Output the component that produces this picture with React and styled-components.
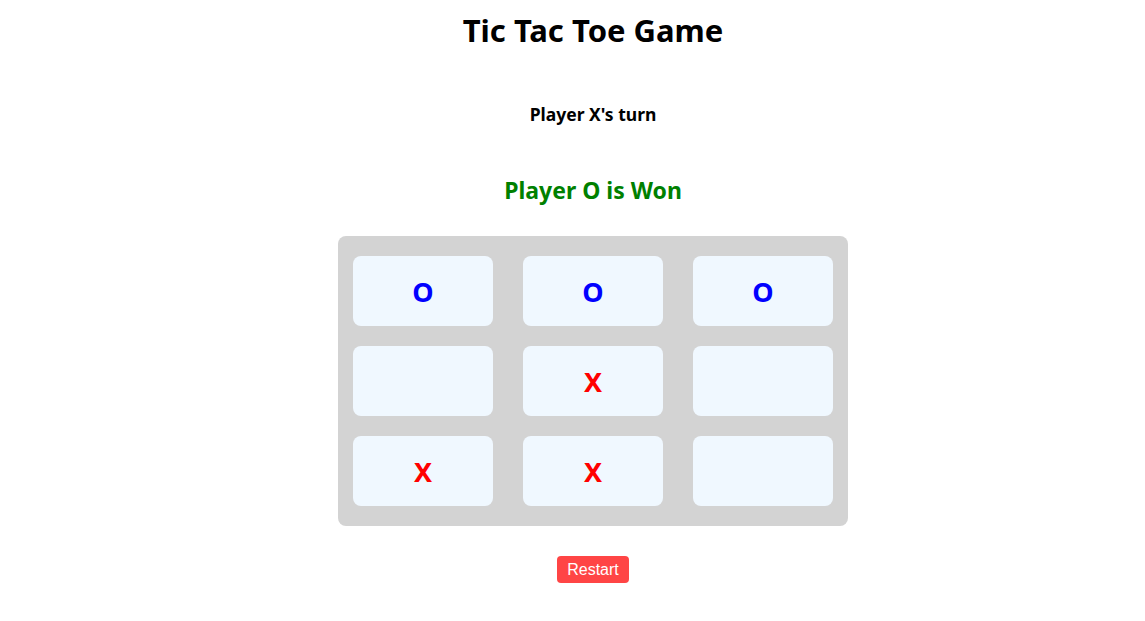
import React from "react";
import styled, { createGlobalStyle } from "styled-components";

const GlobalStyle = createGlobalStyle`
  body {
    margin: 0;
    background: #ffffff;
    font-family: "Noto Sans", "Open Sans", sans-serif;
  }
`;

const Page = styled.div`
  display: flex;
  flex-direction: column;
  align-items: center;
  padding-left: 41px;
`;

const Title = styled.h1`
  margin: 7px 0 0;
  font-size: 31px;
  line-height: 46px;
  font-weight: 700;
  color: #000;
`;

const Turn = styled.h3`
  margin: 48px 0 0;
  font-size: 17.5px;
  line-height: 26px;
  font-weight: 700;
  color: #000;
`;

const Winner = styled.h2`
  margin: 46px 0 0;
  font-size: 23px;
  line-height: 34px;
  font-weight: 700;
  color: #008000;
`;

const Board = styled.div`
  margin-top: 29px;
  display: grid;
  grid-template-columns: repeat(3, 140px);
  grid-auto-rows: 70px;
  column-gap: 30px;
  row-gap: 20px;
  padding: 20px 15px;
  background: #d3d3d3;
  border-radius: 8px;
`;

const Cell = styled.div`
  display: flex;
  align-items: center;
  justify-content: center;
  background: #f0f8ff;
  border-radius: 8px;
  font-size: 27px;
  font-weight: 700;
  color: ${(p) => (p.$mark === "X" ? "#ff0000" : "#0000ff")};
`;

const RestartButton = styled.button`
  margin-top: 30px;
  padding: 4px 10px;
  height: 27px;
  border: none;
  border-radius: 4px;
  background: #ff4545;
  color: #ffffff;
  font-family: "Liberation Sans", Arial, sans-serif;
  font-size: 16px;
  line-height: 19px;
  cursor: pointer;
`;

const cells = ["O", "O", "O", "", "X", "", "X", "X", ""];

export default function App() {
  return (
    <>
      <GlobalStyle />
      <Page>
        <Title>Tic Tac Toe Game</Title>
        <Turn>Player X's turn</Turn>
        <Winner>Player O is Won</Winner>
        <Board>
          {cells.map((c, i) => (
            <Cell key={i} $mark={c}>
              {c}
            </Cell>
          ))}
        </Board>
        <RestartButton>Restart</RestartButton>
      </Page>
    </>
  );
}
